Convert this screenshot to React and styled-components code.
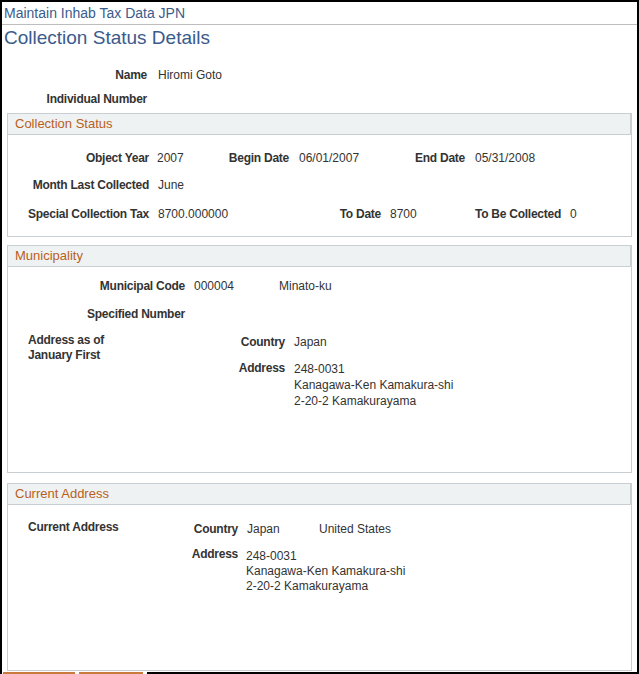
import React from 'react'
import styled, { createGlobalStyle } from 'styled-components'

const Global = createGlobalStyle`
  * { box-sizing: border-box; }
  html, body { margin: 0; padding: 0; background: #fff; }
  body {
    font-family: "Liberation Sans", Arial, sans-serif;
    font-size: 12px;
    color: #333;
  }
`

const Frame = styled.div`
  width: 639px;
  height: 674px;
  border-top: 2px solid #000;
  border-left: 2px solid #000;
  border-right: 2px solid #000;
  overflow: hidden;
  display: flex;
  flex-direction: column;
`

const TopBar = styled.div`
  height: 23px;
  padding: 3px 0 0 2px;
  font-size: 14px;
  line-height: 16px;
  color: #3a5b8c;
  border-bottom: 1px solid #bdbdbd;
`

const Heading = styled.h1`
  margin: 0;
  height: 24px;
  padding: 2px 0 0 2px;
  font-size: 19px;
  line-height: 22px;
  font-weight: normal;
  color: #3a5b8c;
`

const NameBlock = styled.div`
  margin-top: 14px;
`

const NameRow = styled.div`
  display: flex;
  align-items: center;
  height: 24px;
  line-height: 14px;
`

const Row = styled.div`
  display: flex;
  align-items: flex-start;
  line-height: 14px;
  margin-top: ${p => p.$mt || 0}px;
`

const Label = styled.span`
  flex-shrink: 0;
  width: ${p => p.$w}px;
  text-align: right;
  font-weight: bold;
  letter-spacing: -0.25px;
  color: #333;
`

const Value = styled.span`
  flex-shrink: 0;
  width: ${p => (p.$w ? `${p.$w}px` : 'auto')};
  padding-left: ${p => (p.$pad === undefined ? 9 : p.$pad)}px;
  color: #333;
  white-space: nowrap;
`

const Lines = styled.div`
  padding-left: ${p => p.$pad || 9}px;
  padding-top: ${p => p.$top || 0}px;
  line-height: ${p => p.$lh || 16}px;
  color: #333;
`

const Section = styled.section`
  margin: ${p => p.$mt || 0}px 5px 0 5px;
  border: 1px solid #c9ced2;
`

const SectionHead = styled.div`
  height: 21px;
  padding: 0 0 1px 7px;
  line-height: 19px;
  font-size: 13px;
  color: #b8601c;
  background: #eff2f3;
  border-bottom: 1px solid #c9ced2;
  border-right: 1px solid #c9ced2;
`

const SectionBody = styled.div`
  padding: ${p => p.$pt}px 0 ${p => p.$pb}px 0;
`

const AddrBlock = styled.div`
  display: flex;
  align-items: flex-start;
  margin-top: ${p => p.$mt || 0}px;
`

const SideLabel = styled.div`
  flex-shrink: 0;
  width: ${p => p.$w}px;
  padding-left: 20px;
  line-height: 15px;
  font-weight: bold;
  letter-spacing: -0.25px;
  color: #333;
`

const SideText = styled.span`
  display: block;
  width: 100px;
`

const Stack = styled.div`
  display: flex;
  flex-direction: column;
`

const Footer = styled.div`
  display: flex;
  height: 2px;
  margin-top: 1px;
  background: #000;
`

const BtnTop = styled.div`
  width: ${p => p.$w}px;
  margin-right: ${p => p.$gap}px;
  background: #c97a3c;
  box-shadow: ${p => p.$gap}px 0 0 #fff;
`

const Gap = styled.div`
  width: 1px;
  background: #fff;
`

const Address = ({ pad, lh, top }) => (
  <Lines $pad={pad} $lh={lh} $top={top}>
    <div>248-0031</div>
    <div>Kanagawa-Ken Kamakura-shi</div>
    <div>2-20-2 Kamakurayama</div>
  </Lines>
)

export default function App() {
  return (
    <>
      <Global />
      <Frame>
        <TopBar>Maintain Inhab Tax Data JPN</TopBar>
        <Heading>Collection Status Details</Heading>

        <NameBlock>
          <NameRow>
            <Label $w={145}>Name</Label>
            <Value $pad={11}>Hiromi Goto</Value>
          </NameRow>
          <NameRow>
            <Label $w={145}>Individual Number</Label>
          </NameRow>
        </NameBlock>

        <Section $mt={2}>
          <SectionHead>Collection Status</SectionHead>
          <SectionBody $pt={16} $pb={15}>
            <Row>
              <Label $w={141}>Object Year</Label>
              <Value $w={69} $pad={8}>2007</Value>
              <Label $w={71}>Begin Date</Label>
              <Value $w={109} $pad={10}>06/01/2007</Value>
              <Label $w={67}>End Date</Label>
              <Value $pad={10}>05/31/2008</Value>
            </Row>
            <Row $mt={13}>
              <Label $w={141}>Month Last Collected</Label>
              <Value>June</Value>
            </Row>
            <Row $mt={15}>
              <Label $w={141}>Special Collection Tax</Label>
              <Value $w={160}>8700.000000</Value>
              <Label $w={72}>To Date</Label>
              <Value $w={69}>8700</Value>
              <Label $w={111}>To Be Collected</Label>
              <Value>0</Value>
            </Row>
          </SectionBody>
        </Section>

        <Section $mt={8}>
          <SectionHead>Municipality</SectionHead>
          <SectionBody $pt={12} $pb={63}>
            <Row>
              <Label $w={177}>Municipal Code</Label>
              <Value $w={94}>000004</Value>
              <Value $pad={0}>Minato-ku</Value>
            </Row>
            <Row $mt={14}>
              <Label $w={177}>Specified Number</Label>
            </Row>
            <AddrBlock $mt={12}>
              <SideLabel $w={200}>
                <SideText>Address as of January First</SideText>
              </SideLabel>
              <Stack>
                <Row $mt={2}>
                  <Label $w={77}>Country</Label>
                  <Value>Japan</Value>
                </Row>
                <Row $mt={12}>
                  <Label $w={77}>Address</Label>
                  <Address pad={9} lh={16} />
                </Row>
              </Stack>
            </AddrBlock>
          </SectionBody>
        </Section>

        <Section $mt={10}>
          <SectionHead>Current Address</SectionHead>
          <SectionBody $pt={15} $pb={76}>
            <AddrBlock>
              <SideLabel $w={150}>
                <SideText>Current Address</SideText>
              </SideLabel>
              <Stack>
                <Row $mt={2}>
                  <Label $w={80}>Country</Label>
                  <Value $w={81}>Japan</Value>
                  <Value $pad={0}>United States</Value>
                </Row>
                <Row $mt={11}>
                  <Label $w={80}>Address</Label>
                  <Address pad={8} lh={15} top={2} />
                </Row>
              </Stack>
            </AddrBlock>
          </SectionBody>
        </Section>

        <Footer>
          <Gap />
          <BtnTop $w={72} $gap={4} />
          <BtnTop $w={64} $gap={4} />
        </Footer>
      </Frame>
    </>
  )
}
